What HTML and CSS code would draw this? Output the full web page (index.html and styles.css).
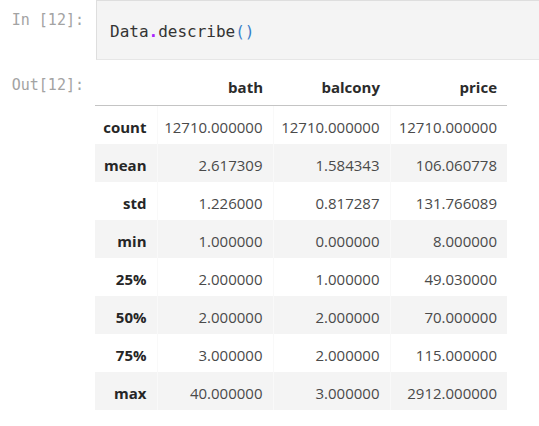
FILE: index.html
```html
<!DOCTYPE html>
<html>
<head>
<meta charset="utf-8">
<link rel="stylesheet" href="styles.css">
</head>
<body>
<div class="cell">
  <div class="row input-row">
    <div class="prompt in-prompt">In&nbsp;[12]:</div>
    <div class="input-box"><span class="code"><span class="var">Data</span><span class="op">.</span><span class="var">describe</span><span class="paren">()</span></span></div>
  </div>
  <div class="row output-row">
    <div class="prompt out-prompt">Out[12]:</div>
    <table class="df">
      <colgroup><col class="c0"><col class="c1"><col class="c2"><col class="c3"></colgroup>
      <thead>
        <tr><th></th><th>bath</th><th>balcony</th><th>price</th></tr>
      </thead>
      <tbody>
        <tr><th>count</th><td>12710.000000</td><td>12710.000000</td><td>12710.000000</td></tr>
        <tr><th>mean</th><td>2.617309</td><td>1.584343</td><td>106.060778</td></tr>
        <tr><th>std</th><td>1.226000</td><td>0.817287</td><td>131.766089</td></tr>
        <tr><th>min</th><td>1.000000</td><td>0.000000</td><td>8.000000</td></tr>
        <tr><th>25%</th><td>2.000000</td><td>1.000000</td><td>49.030000</td></tr>
        <tr><th>50%</th><td>2.000000</td><td>2.000000</td><td>70.000000</td></tr>
        <tr><th>75%</th><td>3.000000</td><td>2.000000</td><td>115.000000</td></tr>
        <tr><th>max</th><td>40.000000</td><td>3.000000</td><td>2912.000000</td></tr>
      </tbody>
    </table>
  </div>
</div>
</body>
</html>
```
FILE: styles.css
```css
html, body {
  margin: 0;
  padding: 0;
  background: #ffffff;
  overflow: hidden;
}
body {
  width: 539px;
  height: 426px;
  font-family: "Open Sans", "Noto Sans", sans-serif;
}
.row {
  display: flex;
  align-items: flex-start;
}
.prompt {
  flex: 0 0 96px;
  box-sizing: border-box;
  padding-right: 12px;
  text-align: right;
  font-family: "DejaVu Sans Mono", monospace;
  font-size: 15px;
  line-height: 20px;
  color: #a3a3a3;
  white-space: nowrap;
}
.in-prompt {
  padding-top: 10px;
}
.input-box {
  flex: 1 1 auto;
  height: 58px;
  box-sizing: border-box;
  margin-top: 0;
  height: 60px;
  background: #f4f4f4;
  border: 1px solid #dedede;
  border-right: 0;
  border-bottom-color: #e6e6e6;
  padding: 19px 0 0 13px;
}
.code {
  font-family: "DejaVu Sans Mono", monospace;
  font-size: 16px;
  line-height: 20px;
  color: #333333;
}
.op { color: #aa22ff; font-weight: bold; }
.paren { color: #3a7fc8; }
.output-row {
  margin-top: 7px;
}
.out-prompt {
  padding-top: 8px;
}
.df {
  border-collapse: collapse;
  table-layout: fixed;
  width: 412px;
  margin-left: -1px;
  font-size: 15px;
  line-height: 20px;
  color: #4a4a4a;
}
.c0 { width: 62px; }
.c1 { width: 116px; }
.c2 { width: 117px; }
.c3 { width: 117px; }
.df th, .df td {
  text-align: right;
  padding: 11px 10px 7px 0;
  white-space: nowrap;
  height: 20px;
}
.df th {
  font-weight: 700;
  color: #262626;
}
.df thead th {
  padding-top: 10px;
  padding-bottom: 8px;
  border-bottom: 1px solid #c4c4c4;
  color: #2b2b2b;
}
.df tbody tr:nth-child(even) {
  background: #f4f4f4;
}
.df tbody td {
  border-left: 1px solid #f9f9f9;
}
```
